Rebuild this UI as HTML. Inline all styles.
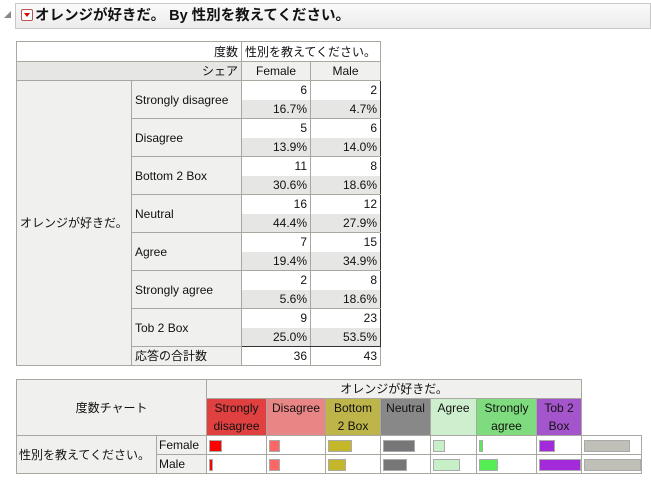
<!DOCTYPE html>
<html><head><meta charset="utf-8"><style>
body{margin:0;width:651px;height:482px;background:#fff;font-family:"Liberation Sans","Noto Sans CJK JP",sans-serif;font-size:12px;color:#111;position:relative;overflow:hidden}
.title{position:absolute;left:15px;top:3px;width:634px;height:24px;border:1px solid #c8c8c8;background:linear-gradient(#fafafa,#ececec);font-weight:bold;font-size:14.5px;line-height:24px}
.tri{position:absolute;left:4px;top:11px;width:0;height:0;border-left:7px solid transparent;border-bottom:7px solid #888}
.dd{display:inline-block;width:10px;height:10px;border:1px solid #b55;border-radius:2px;background:#fff;vertical-align:-1px;margin:0 2px 0 5px;position:relative}
.dd:after{content:"";position:absolute;left:2px;top:3px;border-left:3px solid transparent;border-right:3px solid transparent;border-top:4px solid #d00}
table{border-collapse:collapse;position:absolute;table-layout:fixed}
td{border:1px solid #a8a8a0;padding:0 3px;line-height:18px;white-space:nowrap;overflow:hidden}
.t1 tr{height:19px}
.g{background:#f0f0ee}.p{background:#e6e6e4}.r{text-align:right}.c{text-align:center}
.bar{display:inline-block;height:12px;vertical-align:middle;border:1px solid #aaa;box-sizing:border-box}
.ch td{padding:0 2px}
</style></head><body>
<div class="tri"></div>
<div class="title"><span class="dd"></span>オレンジが好きだ。 By 性別を教えてください。</div>

<table class="t1" style="left:16px;top:41px;width:365px">
<colgroup><col style="width:115px"><col style="width:110px"><col style="width:69px"><col style="width:70px"></colgroup>
<tr style="height:20px"><td colspan="2" class="r">度数</td><td colspan="2" style="border-left:1px solid #888">性別を教えてください。</td></tr>
<tr><td colspan="2" class="r p">シェア</td><td class="c g">Female</td><td class="c g">Male</td></tr>
<tr><td rowspan="15" class="g">オレンジが好きだ。</td><td rowspan="2" class="g">Strongly disagree</td><td class="r" style="border-left:1px solid #333;border-top:1px solid #333;border-bottom:none">6</td><td class="r" style="border-right:1px solid #333;border-top:1px solid #333;border-bottom:none">2</td></tr>
<tr><td class="r p" style="border-left:1px solid #333;border-top:none">16.7%</td><td class="r p" style="border-right:1px solid #333;border-top:none">4.7%</td></tr>
<tr><td rowspan="2" class="g">Disagree</td><td class="r" style="border-left:1px solid #333;border-bottom:none">5</td><td class="r" style="border-right:1px solid #333;border-bottom:none">6</td></tr>
<tr><td class="r p" style="border-left:1px solid #333;border-top:none">13.9%</td><td class="r p" style="border-right:1px solid #333;border-top:none">14.0%</td></tr>
<tr><td rowspan="2" class="g">Bottom 2 Box</td><td class="r" style="border-left:1px solid #333;border-bottom:none">11</td><td class="r" style="border-right:1px solid #333;border-bottom:none">8</td></tr>
<tr><td class="r p" style="border-left:1px solid #333;border-top:none">30.6%</td><td class="r p" style="border-right:1px solid #333;border-top:none">18.6%</td></tr>
<tr><td rowspan="2" class="g">Neutral</td><td class="r" style="border-left:1px solid #333;border-bottom:none">16</td><td class="r" style="border-right:1px solid #333;border-bottom:none">12</td></tr>
<tr><td class="r p" style="border-left:1px solid #333;border-top:none">44.4%</td><td class="r p" style="border-right:1px solid #333;border-top:none">27.9%</td></tr>
<tr><td rowspan="2" class="g">Agree</td><td class="r" style="border-left:1px solid #333;border-bottom:none">7</td><td class="r" style="border-right:1px solid #333;border-bottom:none">15</td></tr>
<tr><td class="r p" style="border-left:1px solid #333;border-top:none">19.4%</td><td class="r p" style="border-right:1px solid #333;border-top:none">34.9%</td></tr>
<tr><td rowspan="2" class="g">Strongly agree</td><td class="r" style="border-left:1px solid #333;border-bottom:none">2</td><td class="r" style="border-right:1px solid #333;border-bottom:none">8</td></tr>
<tr><td class="r p" style="border-left:1px solid #333;border-top:none">5.6%</td><td class="r p" style="border-right:1px solid #333;border-top:none">18.6%</td></tr>
<tr><td rowspan="2" class="g">Tob 2 Box</td><td class="r" style="border-left:1px solid #333;border-bottom:none">9</td><td class="r" style="border-right:1px solid #333;border-bottom:none">23</td></tr>
<tr><td class="r p" style="border-left:1px solid #333;border-top:none;border-bottom:1px solid #333">25.0%</td><td class="r p" style="border-right:1px solid #333;border-top:none;border-bottom:1px solid #333">53.5%</td></tr>
<tr><td class="g">応答の合計数</td><td class="r">36</td><td class="r">43</td></tr>
</table>

<table class="ch" style="left:16px;top:379px;width:625px">
<colgroup><col style="width:140px"><col style="width:50px"><col style="width:60px"><col style="width:59px"><col style="width:55px"><col style="width:50px"><col style="width:46px"><col style="width:60px"><col style="width:45px"><col style="width:60px"></colgroup>
<tr><td colspan="2" rowspan="2" class="c g">度数チャート</td><td colspan="7" class="c g">オレンジが好きだ。</td><td rowspan="2" style="border:none;background:#fff"></td></tr>
<tr><td class="c" style="background:#e04040;height:36px">Strongly<br>disagree</td><td class="c" style="background:#e88585;vertical-align:top">Disagree</td><td class="c" style="background:#bdb44a">Bottom<br>2 Box</td><td class="c" style="background:#888;vertical-align:top">Neutral</td><td class="c" style="background:#ceefce;vertical-align:top">Agree</td><td class="c" style="background:#7edc7e">Strongly<br>agree</td><td class="c" style="background:#a455cc">Tob 2<br>Box</td></tr>
<tr><td rowspan="2" class="g">性別を教えてください。</td><td class="g">Female</td>
<td><span class="bar" style="width:13px;background:#f00"></span></td>
<td><span class="bar" style="width:11px;background:#f66"></span></td>
<td><span class="bar" style="width:24px;background:#c4b82a"></span></td>
<td><span class="bar" style="width:32px;background:#777"></span></td>
<td><span class="bar" style="width:12px;background:#c8f0c8"></span></td>
<td><span class="bar" style="width:4px;background:#5e5"></span></td>
<td><span class="bar" style="width:16px;background:#a22ad8"></span></td>
<td><span class="bar" style="width:46px;background:#c0c0b8"></span></td></tr>
<tr><td class="g">Male</td>
<td><span class="bar" style="width:4px;background:#f00"></span></td>
<td><span class="bar" style="width:11px;background:#f66"></span></td>
<td><span class="bar" style="width:18px;background:#c4b82a"></span></td>
<td><span class="bar" style="width:24px;background:#777"></span></td>
<td><span class="bar" style="width:27px;background:#c8f0c8"></span></td>
<td><span class="bar" style="width:19px;background:#5e5"></span></td>
<td><span class="bar" style="width:42px;background:#a22ad8"></span></td>
<td><span class="bar" style="width:57px;background:#c0c0b8"></span></td></tr>
</table>
</body></html>
